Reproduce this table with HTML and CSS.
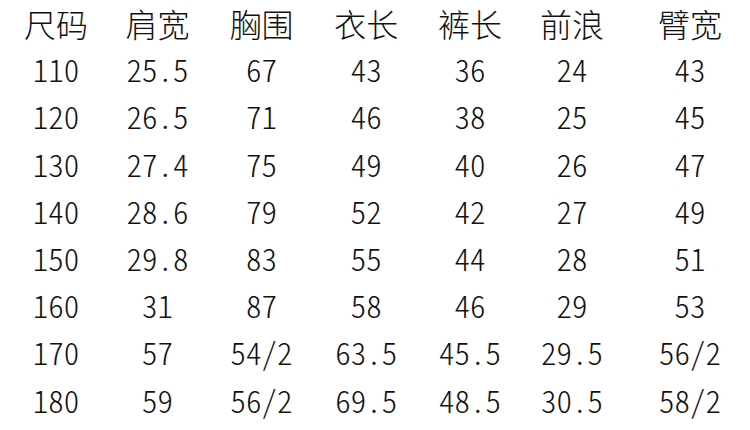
FILE: index.html
```html
<!DOCTYPE html>
<html lang="zh-CN">
<head>
<meta charset="utf-8">
<title>尺码表</title>
<link rel="stylesheet" href="styles.css">
</head>
<body>
<div class="size-table">
  <div class="cell head">尺码</div><div class="cell head">肩宽</div><div class="cell head">胸围</div><div class="cell head">衣长</div><div class="cell head">裤长</div><div class="cell head">前浪</div><div class="cell head">臂宽</div>
  <div class="cell">110</div><div class="cell">25.5</div><div class="cell">67</div><div class="cell">43</div><div class="cell">36</div><div class="cell">24</div><div class="cell">43</div>
  <div class="cell">120</div><div class="cell">26.5</div><div class="cell">71</div><div class="cell">46</div><div class="cell">38</div><div class="cell">25</div><div class="cell">45</div>
  <div class="cell">130</div><div class="cell">27.4</div><div class="cell">75</div><div class="cell">49</div><div class="cell">40</div><div class="cell">26</div><div class="cell">47</div>
  <div class="cell">140</div><div class="cell">28.6</div><div class="cell">79</div><div class="cell">52</div><div class="cell">42</div><div class="cell">27</div><div class="cell">49</div>
  <div class="cell">150</div><div class="cell">29.8</div><div class="cell">83</div><div class="cell">55</div><div class="cell">44</div><div class="cell">28</div><div class="cell">51</div>
  <div class="cell">160</div><div class="cell">31</div><div class="cell">87</div><div class="cell">58</div><div class="cell">46</div><div class="cell">29</div><div class="cell">53</div>
  <div class="cell">170</div><div class="cell">57</div><div class="cell">54/2</div><div class="cell">63.5</div><div class="cell">45.5</div><div class="cell">29.5</div><div class="cell">56/2</div>
  <div class="cell">180</div><div class="cell">59</div><div class="cell">56/2</div><div class="cell">69.5</div><div class="cell">48.5</div><div class="cell">30.5</div><div class="cell">58/2</div>
</div>
</body>
</html>
```

FILE: styles.css
```css
html, body {
  margin: 0;
  padding: 0;
  background: #ffffff;
  overflow: hidden;
}

.size-table {
  display: grid;
  grid-template-columns: 100px 103px 105px 104.5px 103px 101px 128px;
  grid-template-rows: 45.5px;
  grid-auto-rows: 47.2px;
  padding-top: 1.7px;
  padding-left: 6px;
  font-family: "Noto Sans CJK SC", "Noto Sans", sans-serif;
  font-weight: 300;
  font-feature-settings: "hwid" 1;
  color: #111111;
}

.cell {
  font-size: 31px;
  line-height: 43px;
  text-align: center;
  white-space: nowrap;
}

.cell:nth-child(7n) {
  padding-left: 7px;
}

.head {
  font-size: 32px;
}
```
